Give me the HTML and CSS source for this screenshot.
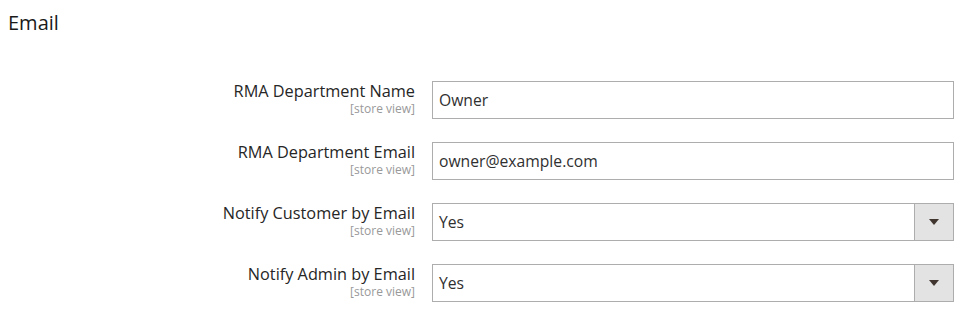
FILE: index.html
```html
<!DOCTYPE html>
<html lang="en">
<head>
<meta charset="utf-8">
<title>Email</title>
<link rel="stylesheet" href="styles.css">
</head>
<body>
<section class="section">
  <h2 class="section-title">Email</h2>
  <div class="fieldset">
    <div class="field">
      <div class="label">
        <span class="label-text">RMA Department Name</span>
        <span class="scope">[store view]</span>
      </div>
      <div class="control"><input class="input" type="text" value="Owner"></div>
    </div>
    <div class="field">
      <div class="label">
        <span class="label-text">RMA Department Email</span>
        <span class="scope">[store view]</span>
      </div>
      <div class="control"><input class="input" type="text" value="owner@example.com"></div>
    </div>
    <div class="field">
      <div class="label">
        <span class="label-text">Notify Customer by Email</span>
        <span class="scope">[store view]</span>
      </div>
      <div class="control">
        <div class="select"><span class="select-value">Yes</span><span class="select-btn"><span class="arrow"></span></span></div>
      </div>
    </div>
    <div class="field">
      <div class="label">
        <span class="label-text">Notify Admin by Email</span>
        <span class="scope">[store view]</span>
      </div>
      <div class="control">
        <div class="select"><span class="select-value">Yes</span><span class="select-btn"><span class="arrow"></span></span></div>
      </div>
    </div>
  </div>
</section>
</body>
</html>
```
FILE: styles.css
```css
* { box-sizing: border-box; }
html, body { margin: 0; padding: 0; background: #fff; }
body { font-family: "Open Sans", "Noto Sans", sans-serif; color: #303030; }
.section { padding: 10px 9px 0 8px; }
.section-title {
  margin: 0;
  font-size: 20px;
  font-weight: 400;
  line-height: 26px;
  color: #1a1a1a;
}
.fieldset {
  display: flex;
  flex-direction: column;
  gap: 23px;
  margin-top: 45px;
}
.field { display: flex; align-items: flex-start; }
.label {
  width: 424px;
  padding-right: 17px;
  margin-top: -1px;
  display: flex;
  flex-direction: column;
  align-items: flex-end;
  text-align: right;
}
.label-text {
  font-size: 16.3px;
  font-weight: 400;
  line-height: 22px;
  color: #262626;
}
.scope {
  font-size: 12px;
  line-height: 13px;
  color: #999;
}
.control { flex: 1; }
.input, .select {
  display: block;
  width: 100%;
  height: 38px;
  border: 1px solid #adadad;
  background: #fff;
  font-family: "Open Sans", "Noto Sans", sans-serif;
  font-size: 15.7px;
  color: #303030;
  padding: 0 6px;
  margin: 0;
  outline: none;
}
.select {
  display: flex;
  align-items: stretch;
  padding: 0 0 0 6px;
}
.select-value { flex: 1; display: flex; align-items: center; }
.select-btn {
  width: 39px;
  background: #e3e3e3;
  border-left: 1px solid #adadad;
  display: flex;
  align-items: center;
  justify-content: center;
}
.arrow {
  width: 0; height: 0;
  border-left: 5px solid transparent;
  border-right: 5px solid transparent;
  border-top: 6px solid #41362f;
}
```
